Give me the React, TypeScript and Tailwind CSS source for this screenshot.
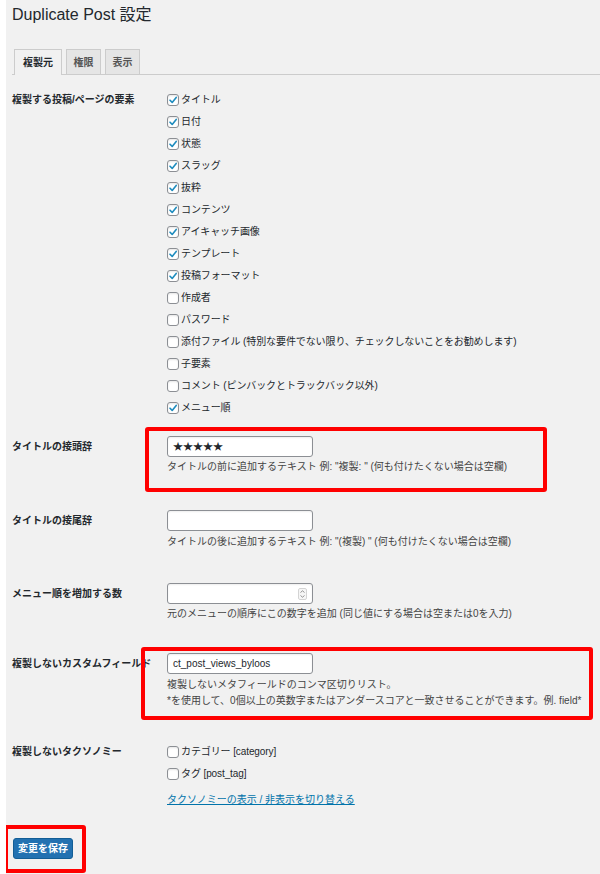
import React from 'react'

const FONT = '[font-family:"Liberation_Sans","Noto_Sans_CJK_JP",sans-serif]'

const elements: [string, boolean][] = [
  ['タイトル', true],
  ['日付', true],
  ['状態', true],
  ['スラッグ', true],
  ['抜粋', true],
  ['コンテンツ', true],
  ['アイキャッチ画像', true],
  ['テンプレート', true],
  ['投稿フォーマット', true],
  ['作成者', false],
  ['パスワード', false],
  ['添付ファイル (特別な要件でない限り、チェックしないことをお勧めします)', false],
  ['子要素', false],
  ['コメント (ピンバックとトラックバック以外)', false],
  ['メニュー順', true],
]

function Check({ label, checked }: { label: string; checked: boolean }) {
  return (
    <div className="flex h-[22px] items-center gap-[2px]">
      <span className="flex h-[12px] w-[12px] items-center justify-center rounded-[3px] border border-[#8c8f94] bg-white shadow-[inset_0_1px_2px_rgba(0,0,0,0.1)]">
        {checked && (
          <svg width="10" height="10" viewBox="0 0 10 10">
            <path d="M2 5.2 L4.2 7.4 L8.2 2.4" fill="none" stroke="#1e8cbe" strokeWidth="1.6" strokeLinecap="round" strokeLinejoin="round" />
          </svg>
        )}
      </span>
      <span className="text-[10px] leading-[14px] tracking-[-0.1px] text-[#23282d]">{label}</span>
    </div>
  )
}

function TextInput({ value, spinner }: { value?: string; spinner?: boolean }) {
  return (
    <div className="flex h-[21px] w-[146px] items-center justify-between rounded-[3px] border border-[#8c8f94] bg-white px-[5px] text-[10px] text-[#23282d] shadow-[inset_0_1px_2px_rgba(0,0,0,0.07)]">
      <span>{value}</span>
      {spinner && (
        <svg width="9" height="12" viewBox="0 0 9 12">
          <rect x="0.5" y="0.5" width="8" height="11" rx="1.5" fill="#f6f6f6" stroke="#d4d4d4" />
          <path d="M2.5 4.5 L4.5 2.8 L6.5 4.5 M2.5 7.5 L4.5 9.2 L6.5 7.5" fill="none" stroke="#888" strokeWidth="0.9" />
        </svg>
      )}
    </div>
  )
}

function Desc({ children }: { children: React.ReactNode }) {
  return <p className="text-[10px] leading-[15px] text-[#444]">{children}</p>
}

function Row({ label, children, className }: { label: string; children: React.ReactNode; className?: string }) {
  return (
    <div className={`flex ${className ?? ''}`}>
      <div className="w-[155px] shrink-0 whitespace-nowrap text-[10px] font-bold leading-[21px] text-[#23282d]">{label}</div>
      <div className="flex flex-col">{children}</div>
    </div>
  )
}

export default function App() {
  return (
    <div className={`relative h-[874px] w-[600px] overflow-hidden border-l-[6px] border-white bg-[#f1f1f1] ${FONT}`}>
      <div className="pl-[6px]">
        <h1 className="pt-[5px] text-[16px] leading-[20px] text-[#23282d]">Duplicate Post 設定</h1>

        <div className="mt-[24px] flex items-end gap-[4px] border-b border-[#ccc] pl-[2px]">
          <div className="-mb-px flex h-[26px] w-[48px] items-center justify-center border border-b-0 border-[#ccc] bg-[#f1f1f1] text-[10px] font-bold text-[#23282d]">
            複製元
          </div>
          <div className="flex h-[25px] w-[35px] items-center justify-center border border-b-0 border-[#ccc] bg-[#e5e5e5] text-[10px] font-bold text-[#555]">
            権限
          </div>
          <div className="flex h-[25px] w-[35px] items-center justify-center border border-b-0 border-[#ccc] bg-[#e5e5e5] text-[10px] font-bold text-[#555]">
            表示
          </div>
        </div>

        <div className="pt-[14px]">
          <div className="flex">
            <div className="w-[155px] shrink-0 text-[10px] font-bold leading-[22px] text-[#23282d]">複製する投稿/ページの要素</div>
            <div className="flex flex-col">
              {elements.map(([l, c]) => (
                <Check key={l} label={l} checked={c} />
              ))}
            </div>
          </div>

          <Row label="タイトルの接頭辞" className="mt-[17px]">
            <TextInput value="★★★★★" />
            <div className="mt-[2px]">
              <Desc>タイトルの前に追加するテキスト 例: "複製: " (何も付けたくない場合は空欄)</Desc>
            </div>
          </Row>

          <Row label="タイトルの接尾辞" className="mt-[36px]">
            <TextInput />
            <div className="mt-[3px]">
              <Desc>タイトルの後に追加するテキスト 例: "(複製) " (何も付けたくない場合は空欄)</Desc>
            </div>
          </Row>

          <Row label="メニュー順を増加する数" className="mt-[34px]">
            <TextInput spinner />
            <div className="mt-[2px]">
              <Desc>元のメニューの順序にこの数字を追加 (同じ値にする場合は空または0を入力)</Desc>
            </div>
          </Row>

          <Row label="複製しないカスタムフィールド" className="mt-[32px]">
            <TextInput value="ct_post_views_byloos" />
            <div className="mt-[3px]">
              <p className="text-[10px] leading-[16px] text-[#444]">複製しないメタフィールドのコンマ区切りリスト。</p>
              <p className="text-[10px] leading-[16px] text-[#444]">*を使用して、0個以上の英数字またはアンダースコアと一致させることができます。例. field*</p>
            </div>
          </Row>

          <div className="mt-[32px] flex">
            <div className="w-[155px] shrink-0 text-[10px] font-bold leading-[22px] text-[#23282d]">複製しないタクソノミー</div>
            <div className="flex flex-col">
              <Check label="カテゴリー [category]" checked={false} />
              <Check label="タグ [post_tag]" checked={false} />
              <a className="mt-[8px] text-[10px] leading-[14px] text-[#0073aa] underline">タクソノミーの表示 / 非表示を切り替える</a>
            </div>
          </div>

          <button className="ml-[1px] mt-[31px] h-[21px] w-[60px] rounded-[3px] border border-[#135e96] bg-[#2271b1] text-[10px] font-bold text-white">
            変更を保存
          </button>
        </div>
      </div>

      {/* annotation boxes */}
      <div className="pointer-events-none absolute left-[139px] top-[427px] h-[65px] w-[402px] rounded-[3px] border-[4px] border-[#ff0000]" />
      <div className="pointer-events-none absolute left-[135px] top-[647px] h-[73px] w-[452px] rounded-[3px] border-[4px] border-[#ff0000]" />
      <div className="pointer-events-none absolute left-[-2px] top-[825px] h-[48px] w-[82px] rounded-[3px] border-[4px] border-[#ff0000]" />
    </div>
  )
}
